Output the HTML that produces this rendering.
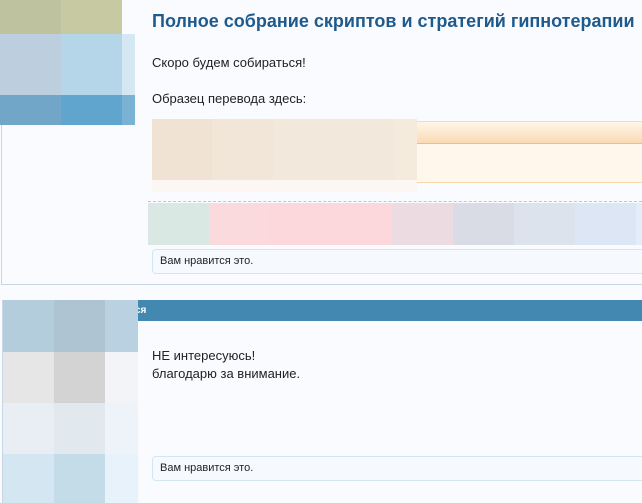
<!DOCTYPE html>
<html><head><meta charset="utf-8"><style>
*{margin:0;padding:0;box-sizing:border-box}
body{width:642px;height:503px;overflow:hidden;background:#fafbff;position:relative;font-family:"Liberation Sans",Arial,sans-serif;color:#222}
.a{position:absolute}
.t{font-size:13px;white-space:nowrap}
.like{position:absolute;left:152px;width:500px;height:25px;border:1px solid #d3e5f2;border-radius:4px;background:#f6faff;font-size:11px;padding:5px 0 0 7px;color:#222}
</style></head><body>
<div class="a" style="left:1px;top:0;width:660px;height:285px;border-left:1px solid #c6d6e4;border-bottom:1px solid #c6d6e4"></div>
<div class="a" style="left:0;top:0;width:61px;height:34px;background:#bec29f"></div>
<div class="a" style="left:61px;top:0;width:61px;height:34px;background:#c6c9a2"></div>
<div class="a" style="left:0;top:34px;width:61px;height:61px;background:#bdcfdf"></div>
<div class="a" style="left:61px;top:34px;width:61px;height:61px;background:#b5d6e8"></div>
<div class="a" style="left:122px;top:34px;width:13px;height:61px;background:#d4e7f3"></div>
<div class="a" style="left:0;top:95px;width:61px;height:30px;background:#72a6c9"></div>
<div class="a" style="left:61px;top:95px;width:61px;height:30px;background:#5fa5cd"></div>
<div class="a" style="left:122px;top:95px;width:13px;height:30px;background:#7ab2d3"></div>

<div class="a" style="left:152px;top:11px;font-size:18px;font-weight:bold;color:#1f5a8c;white-space:nowrap">Полное собрание скриптов и стратегий гипнотерапии</div>
<div class="a t" style="left:152px;top:55px">Скоро будем собираться!</div>
<div class="a t" style="left:152px;top:91px">Образец перевода здесь:</div>

<div class="a" style="left:152px;top:119px;width:60px;height:61px;background:#f0e3d4"></div>
<div class="a" style="left:212px;top:119px;width:61px;height:61px;background:#f1e6d8"></div>
<div class="a" style="left:273px;top:119px;width:122px;height:61px;background:#f2e8db"></div>
<div class="a" style="left:395px;top:119px;width:22px;height:61px;background:#f5ebdc"></div>
<div class="a" style="left:152px;top:180px;width:265px;height:12px;background:#fdf7f3"></div>
<div class="a" style="left:417px;top:121px;width:225px;height:23px;border-top:1px solid #f6dcb0;border-bottom:1px solid #f4bd78;background:linear-gradient(#fff6e8,#f9dab3)"></div>
<div class="a" style="left:417px;top:144px;width:225px;height:39px;background:#fff7ec;border-bottom:1px solid #f8d9a8"></div>

<div class="a" style="left:148px;top:201px;width:494px;border-top:1px dashed #b6c8d6"></div>
<div class="a" style="left:148px;top:203px;width:61px;height:42px;background:#d9e8e3"></div>
<div class="a" style="left:209px;top:203px;width:61px;height:42px;background:#fadadd"></div>
<div class="a" style="left:270px;top:203px;width:122px;height:42px;background:#fcd8dc"></div>
<div class="a" style="left:392px;top:203px;width:61px;height:42px;background:#ecdce1"></div>
<div class="a" style="left:453px;top:203px;width:61px;height:42px;background:#d9dce4"></div>
<div class="a" style="left:514px;top:203px;width:61px;height:42px;background:#dce3ed"></div>
<div class="a" style="left:575px;top:203px;width:61px;height:42px;background:#dce6f4"></div>
<div class="a" style="left:636px;top:203px;width:6px;height:42px;background:#e3eefa"></div>
<div class="like" style="top:249px">Вам нравится это.</div>

<div class="a" style="left:2px;top:300px;width:640px;height:21px;background:#4388b0;color:#fff;font-size:10px;font-weight:bold;padding:5px 0 0 133px">ся</div>
<div class="a" style="left:2px;top:300px;width:1px;height:203px;background:#c6d6e4"></div>
<div class="a" style="left:3px;top:300px;width:51px;height:52px;background:#b3cddd"></div>
<div class="a" style="left:54px;top:300px;width:51px;height:52px;background:#aec4d3"></div>
<div class="a" style="left:105px;top:300px;width:33px;height:52px;background:#b9d1e1"></div>
<div class="a" style="left:3px;top:352px;width:51px;height:51px;background:#e6e6e6"></div>
<div class="a" style="left:54px;top:352px;width:51px;height:51px;background:#d3d3d3"></div>
<div class="a" style="left:105px;top:352px;width:33px;height:51px;background:#f2f4f7"></div>
<div class="a" style="left:3px;top:403px;width:51px;height:51px;background:#e8eef3"></div>
<div class="a" style="left:54px;top:403px;width:51px;height:51px;background:#e1e8ee"></div>
<div class="a" style="left:105px;top:403px;width:33px;height:51px;background:#eef3fa"></div>
<div class="a" style="left:3px;top:454px;width:51px;height:49px;background:#d3e6f1"></div>
<div class="a" style="left:54px;top:454px;width:51px;height:49px;background:#c4dbe8"></div>
<div class="a" style="left:105px;top:454px;width:33px;height:49px;background:#e8f2fa"></div>
<div class="a t" style="left:152px;top:348px">НЕ интересуюсь!</div>
<div class="a t" style="left:152px;top:366px">благодарю за внимание.</div>
<div class="like" style="top:456px">Вам нравится это.</div>
</body></html>
